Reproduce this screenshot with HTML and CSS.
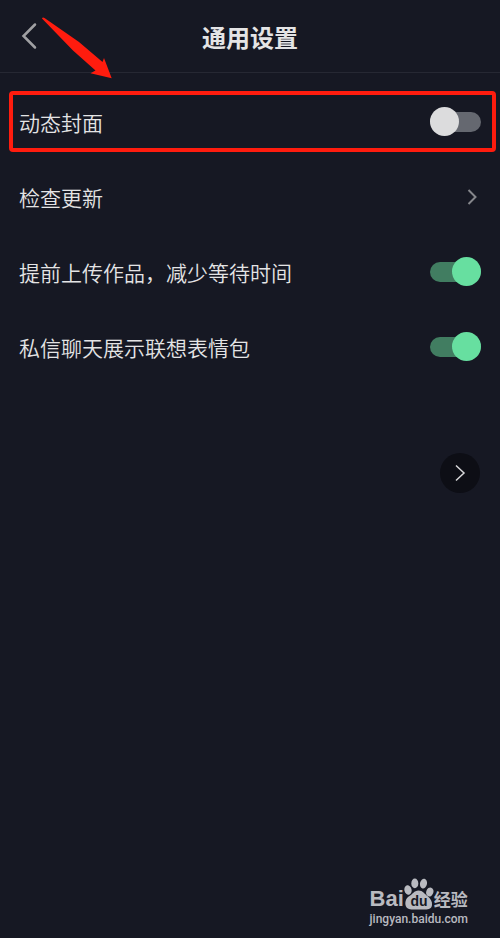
FILE: index.html
```html
<!DOCTYPE html>
<html lang="zh-CN">
<head>
<meta charset="UTF-8" />
<meta name="viewport" content="width=device-width, initial-scale=1" />
<title>通用设置</title>
<link rel="stylesheet" href="styles.css">
</head>
<body>

<header class="topbar">
  <button type="button" class="back" aria-label="返回">
    <svg width="16" height="28" viewBox="0 0 16 28"><path d="M14 2.5 2.5 14 14 25.5" /></svg>
  </button>
  <h1>通用设置</h1>
</header>

<main class="settings">
  <div class="row highlight">
    <label for="cover">动态封面</label>
    <input type="checkbox" class="switch" id="cover">
  </div>
  <a class="row" href="#update">
    <span class="text">检查更新</span>
    <svg class="chevron" width="10" height="16" viewBox="0 0 10 16"><path d="M1.5 1 8.5 8 1.5 15" /></svg>
  </a>
  <div class="row">
    <label for="upload">提前上传作品，减少等待时间</label>
    <input type="checkbox" class="switch" id="upload" checked>
  </div>
  <div class="row">
    <label for="emoji">私信聊天展示联想表情包</label>
    <input type="checkbox" class="switch" id="emoji" checked>
  </div>
</main>

<button type="button" class="float-btn" aria-label="下一步">
  <svg width="12" height="18" viewBox="0 0 12 18"><path d="M2 1.5 10 9 2 16.5" /></svg>
</button>

<!-- 红色箭头 -->
<svg class="arrow" width="72" height="64" viewBox="0 0 72 64">
  <path d="M2 3.5 Q2.5 2 4.5 3 L39 27 L62.5 47 L64 43 L71.7 63.3 L50.5 58.3 L55.5 55.5 L33 35.5 Z" />
</svg>

<footer class="watermark">
  <div class="brand">
    <span class="bai">Bai</span>
    <svg class="paw" width="30" height="32" viewBox="0 0 30 32">
      <ellipse cx="4" cy="12" rx="3.6" ry="4.8" transform="rotate(-12 4 12)" />
      <ellipse cx="10.8" cy="5.4" rx="3.5" ry="4.9" />
      <ellipse cx="19.5" cy="5.6" rx="3.5" ry="4.9" transform="rotate(12 19.5 5.6)" />
      <ellipse cx="25.8" cy="14" rx="3.6" ry="4.6" transform="rotate(18 25.8 14)" />
      <path d="M14.5 12.5 C10 12.5 8.5 16.5 5.5 18 C2 20 1 23.5 1.5 27 C2.5 31 6 32 11 31.5 H19 C24 32 27.5 31 28 27 C28.5 23.5 26.5 20.5 23.5 18 C20.5 16 19 12.5 14.5 12.5 Z" />
      <text x="15" y="28" text-anchor="middle">du</text>
    </svg>
    <span class="jingyan">经验</span>
  </div>
  <div class="url">jingyan.baidu.com</div>
</footer>

</body>
</html>
```

FILE: styles.css
```css
* {
  box-sizing: border-box;
}
body {
  margin: 0;
  min-height: 100vh;
  position: relative;
  display: flex;
  flex-direction: column;
  background-color: #161823;
  color: #e4e4e5;
  font-family: "Noto Sans CJK SC", sans-serif;
}
button {
  border: 0;
  padding: 0;
  background: none;
  cursor: pointer;
}
svg {
  display: block;
}
.topbar {
  display: grid;
  grid-template-columns: 16px 1fr 16px;
  align-items: center;
  height: 73px;
  padding: 0 21px;
  border-bottom: 1px solid #262833;
}
.back path {
  fill: none;
  stroke: #a0a0a3;
  stroke-width: 2.5;
  stroke-linecap: round;
}
h1 {
  margin: 0;
  padding-top: 2px;
  text-align: center;
  font-size: 24px;
  line-height: 32px;
  font-weight: 700;
}
.settings {
  padding-top: 11px;
}
.row {
  position: relative;
  display: flex;
  align-items: center;
  justify-content: space-between;
  height: 75px;
  padding: 0 19px;
  color: inherit;
  text-decoration: none;
}
.row label,
.row .text {
  font-size: 21px;
  line-height: 30px;
  font-weight: 350;
}
.highlight::after {
  content: "";
  position: absolute;
  top: 7px;
  right: 4px;
  bottom: 7px;
  left: 9px;
  border: 4px solid #ff1c0e;
  border-radius: 4px;
  pointer-events: none;
}
.chevron {
  margin-right: 4px;
}
.chevron path {
  fill: none;
  stroke: #85868b;
  stroke-width: 2;
}
.switch {
  appearance: none;
  position: relative;
  display: flex;
  align-items: center;
  width: 51px;
  height: 29px;
  margin: 0;
  cursor: pointer;
}
.switch::before {
  content: "";
  width: 100%;
  height: 20px;
  border-radius: 10px;
  background-color: #656870;
}
.switch::after {
  content: "";
  position: absolute;
  left: 0;
  width: 29px;
  height: 29px;
  border-radius: 50%;
  background-color: #dcdcdd;
}
.switch:checked::before {
  background-color: #417d61;
}
.switch:checked::after {
  left: auto;
  right: 0;
  background-color: #67dfa0;
}
.float-btn {
  display: flex;
  align-items: center;
  justify-content: center;
  align-self: flex-end;
  width: 40px;
  height: 40px;
  margin: 69px 20px 0 0;
  border-radius: 50%;
  background-color: #0d0e15;
}
.float-btn path {
  fill: none;
  stroke: #d8d8da;
  stroke-width: 1.5;
}
.arrow {
  position: absolute;
  top: 15px;
  left: 40px;
  fill: #ff1c0e;
  pointer-events: none;
}
.watermark {
  margin-top: auto;
  align-self: flex-end;
  padding: 0 32px 10px 0;
  color: #b9bac0;
}
.brand {
  display: flex;
  align-items: flex-end;
}
.bai {
  font: 700 22px/22px "Liberation Sans", Arial, sans-serif;
}
.paw {
  fill: #b9bac0;
}
.paw text {
  fill: #161823;
  font: 700 14px "Liberation Sans", Arial, sans-serif;
}
.jingyan {
  font-size: 17px;
  line-height: 22px;
  font-weight: 700;
}
.url {
  font: 500 12px/18px Roboto, sans-serif;
}
```
